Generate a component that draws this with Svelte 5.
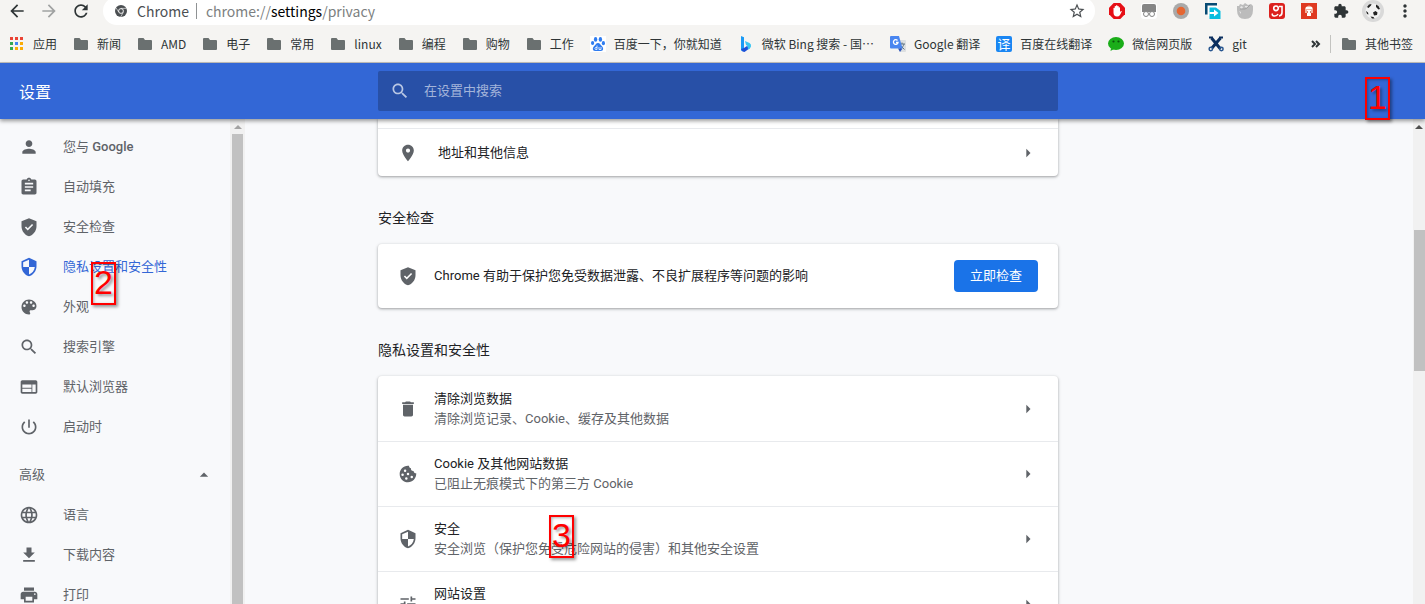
<script lang="ts">
	interface Entry {
		icon: string;
		label: string;
		brand?: string;
		sub?: string;
		active?: boolean;
	}

	const paths: Record<string, string> = {
		person: 'M12 12c2.21 0 4-1.79 4-4s-1.79-4-4-4-4 1.79-4 4 1.79 4 4 4zm0 2c-2.67 0-8 1.34-8 4v2h16v-2c0-2.66-5.33-4-8-4z',
		assignment:
			'M19 3h-4.18C14.4 1.84 13.3 1 12 1c-1.3 0-2.4.84-2.82 2H5c-1.1 0-2 .9-2 2v14c0 1.1.9 2 2 2h14c1.1 0 2-.9 2-2V5c0-1.1-.9-2-2-2zm-7 0c.55 0 1 .45 1 1s-.45 1-1 1-1-.45-1-1 .45-1 1-1zm2 14H7v-2h7v2zm3-4H7v-2h10v2zm0-4H7V7h10v2z',
		check:
			'M12 1.5L3 5v6c0 5.55 3.84 10.74 9 12 5.16-1.26 9-6.45 9-12V5l-9-3.5zM10.5 16.2L7 12.7l1.4-1.4 2.1 2.1 5.1-5.1L17 9.7l-6.5 6.5z',
		security:
			'M12 1L3 5v6c0 5.55 3.84 10.74 9 12 5.16-1.26 9-6.45 9-12V5l-9-4zm0 10.99h7c-.53 4.12-3.28 7.79-7 8.94V12H5V6.3l7-3.11v8.8z',
		palette:
			'M12 3c-4.97 0-9 4.03-9 9s4.03 9 9 9c.83 0 1.5-.67 1.5-1.5 0-.39-.15-.74-.39-1.01-.23-.26-.38-.61-.38-.99 0-.83.67-1.5 1.5-1.5H16c2.76 0 5-2.24 5-5 0-4.42-4.03-8-9-8zm-5.5 9c-.83 0-1.5-.67-1.5-1.5S5.67 9 6.5 9 8 9.67 8 10.5 7.33 12 6.5 12zm3-4C8.67 8 8 7.33 8 6.5S8.67 5 9.5 5s1.5.67 1.5 1.5S10.33 8 9.5 8zm5 0c-.83 0-1.5-.67-1.5-1.5S13.67 5 14.5 5s1.5.67 1.5 1.5S15.33 8 14.5 8zm3 4c-.83 0-1.5-.67-1.5-1.5S16.67 9 17.5 9s1.5.67 1.5 1.5-.67 1.5-1.5 1.5z',
		search:
			'M15.5 14h-.79l-.28-.27C15.41 12.59 16 11.11 16 9.5 16 5.91 13.09 3 9.5 3S3 5.91 3 9.5 5.91 16 9.5 16c1.61 0 3.09-.59 4.23-1.57l.27.28v.79l5 4.99L20.49 19l-4.99-5zm-6 0C7.01 14 5 11.99 5 9.5S7.01 5 9.5 5 14 7.01 14 9.5 11.99 14 9.5 14z',
		web: 'M20 4H4c-1.1 0-1.99.9-1.99 2L2 18c0 1.1.9 2 2 2h16c1.1 0 2-.9 2-2V6c0-1.1-.9-2-2-2zm-5 14H4v-4h11v4zm0-5H4V9h11v4zm5 5h-4V9h4v9z',
		power:
			'M13 3h-2v10h2V3zm4.83 2.17l-1.42 1.42C17.99 7.86 19 9.81 19 12c0 3.87-3.13 7-7 7s-7-3.13-7-7c0-2.19 1.01-4.14 2.58-5.42L6.17 5.17C4.23 6.82 3 9.26 3 12c0 4.97 4.03 9 9 9s9-4.03 9-9c0-2.74-1.23-5.18-3.17-6.83z',
		language:
			'M11.99 2C6.47 2 2 6.48 2 12s4.47 10 9.99 10C17.52 22 22 17.52 22 12S17.52 2 11.99 2zm6.93 6h-2.95c-.32-1.25-.78-2.45-1.38-3.56 1.84.63 3.37 1.91 4.33 3.56zM12 4.04c.83 1.2 1.48 2.53 1.91 3.96h-3.82c.43-1.43 1.08-2.76 1.91-3.96zM4.26 14C4.1 13.36 4 12.69 4 12s.1-1.36.26-2h3.38c-.08.66-.14 1.32-.14 2 0 .68.06 1.34.14 2H4.26zm.82 2h2.95c.32 1.25.78 2.45 1.38 3.56-1.84-.63-3.37-1.9-4.33-3.56zm2.95-8H5.08c.96-1.66 2.49-2.93 4.33-3.56C8.81 5.55 8.35 6.75 8.03 8zM12 19.96c-.83-1.2-1.48-2.53-1.91-3.96h3.82c-.43 1.43-1.08 2.76-1.91 3.96zM14.34 14H9.66c-.09-.66-.16-1.32-.16-2 0-.68.07-1.35.16-2h4.68c.09.65.16 1.32.16 2 0 .68-.07 1.34-.16 2zm.25 5.56c.6-1.11 1.06-2.31 1.38-3.56h2.95c-.96 1.65-2.49 2.93-4.33 3.56zM16.36 14c.08-.66.14-1.32.14-2 0-.68-.06-1.34-.14-2h3.38c.16.64.26 1.31.26 2s-.1 1.36-.26 2h-3.38z',
		download: 'M19 9h-4V3H9v6H5l7 7 7-7zM5 18v2h14v-2H5z',
		print:
			'M19 8H5c-1.66 0-3 1.34-3 3v6h4v4h12v-4h4v-6c0-1.66-1.34-3-3-3zm-3 11H8v-5h8v5zm3-7c-.55 0-1-.45-1-1s.45-1 1-1 1 .45 1 1-.45 1-1 1zm-1-9H6v4h12V3z',
		place:
			'M12 2C8.13 2 5 5.13 5 9c0 5.25 7 13 7 13s7-7.75 7-13c0-3.87-3.13-7-7-7zm0 9.5c-1.38 0-2.5-1.12-2.5-2.5s1.12-2.5 2.5-2.5 2.5 1.12 2.5 2.5-1.12 2.5-2.5 2.5z',
		trash: 'M6 19c0 1.1.9 2 2 2h8c1.1 0 2-.9 2-2V7H6v12zM19 4h-3.5l-1-1h-5l-1 1H5v2h14V4z',
		cookie:
			'M21.9 11.2c-1.7.1-3.1-1.1-3.2-2.8-2.2.2-3.6-1.4-3.1-3.3-1.7-.3-2.6-1.6-2.3-3C6.8 1.3 2 6.2 2 12c0 5.5 4.5 10 10 10s10.2-4.7 9.9-10.8zM8.5 6.5a1.5 1.5 0 1 1 0 3 1.5 1.5 0 0 1 0-3zM5.500 11.5a1.5 1.5 0 1 1 0 3 1.5 1.5 0 0 1 0-3zM12 10.5a1.5 1.5 0 1 1 0 3 1.5 1.5 0 0 1 0-3zM10 16a1.5 1.5 0 1 1 0 3 1.5 1.5 0 0 1 0-3zM16.5 14a1.5 1.5 0 1 1 0 3 1.5 1.5 0 0 1 0-3z',
		tune: 'M3 17v2h6v-2H3zM3 5v2h10V5H3zm10 16v-2h8v-2h-8v-2h-2v6h2zM7 9v2H3v2h4v2h2V9H7zm14 4v-2H11v2h10zm-6-4h2V7h4V5h-4V3h-2v6z',
		right: 'M10 17l5-5-5-5v10z',
		up: 'M7 14l5-5 5 5z',
		back: 'M20 11H7.83l5.59-5.59L12 4l-8 8 8 8 1.41-1.41L7.83 13H20v-2z',
		forward: 'M12 4l-1.41 1.41L16.17 11H4v2h12.17l-5.58 5.59L12 20l8-8z',
		reload:
			'M17.65 6.35C16.2 4.9 14.21 4 12 4c-4.42 0-7.99 3.58-7.99 8s3.57 8 7.99 8c3.73 0 6.84-2.55 7.73-6h-2.08c-.82 2.33-3.04 4-5.65 4-3.31 0-6-2.69-6-6s2.69-6 6-6c1.66 0 3.14.69 4.22 1.78L13 11h7V4l-2.35 2.35z',
		star: 'M22 9.24l-7.19-.62L12 2 9.19 8.63 2 9.24l5.46 4.73L5.82 21 12 17.27 18.18 21l-1.63-7.03L22 9.24zM12 15.4l-3.76 2.27 1-4.28-3.32-2.88 4.38-.38L12 6.1l1.71 4.04 4.38.38-3.32 2.88 1 4.28L12 15.4z',
		more: 'M12 8c1.1 0 2-.9 2-2s-.9-2-2-2-2 .9-2 2 .9 2 2 2zm0 2c-1.1 0-2 .9-2 2s.9 2 2 2 2-.9 2-2-.9-2-2-2zm0 6c-1.1 0-2 .9-2 2s.9 2 2 2 2-.9 2-2-.9-2-2-2z',
		puzzle:
			'M20.5 11H19V7c0-1.1-.9-2-2-2h-4V3.5C13 2.12 11.88 1 10.5 1S8 2.12 8 3.5V5H4c-1.1 0-1.99.9-1.99 2v3.8H3.5c1.49 0 2.7 1.21 2.7 2.7s-1.21 2.7-2.7 2.7H2V20c0 1.1.9 2 2 2h3.8v-1.5c0-1.49 1.21-2.7 2.7-2.7s2.7 1.21 2.7 2.7V22H17c1.1 0 2-.9 2-2v-4h1.5c1.38 0 2.5-1.12 2.5-2.5S21.88 11 20.5 11z'
	};

	const bookmarks: Entry[] = [
		{ icon: 'apps', label: '应用' },
		{ icon: 'folder', label: '新闻' },
		{ icon: 'folder', label: 'AMD' },
		{ icon: 'folder', label: '电子' },
		{ icon: 'folder', label: '常用' },
		{ icon: 'folder', label: 'linux' },
		{ icon: 'folder', label: '编程' },
		{ icon: 'folder', label: '购物' },
		{ icon: 'folder', label: '工作' },
		{ icon: 'baidu', label: '百度一下，你就知道' },
		{ icon: 'bing', label: '微软 Bing 搜索 - 国⋯' },
		{ icon: 'gtranslate', label: 'Google 翻译' },
		{ icon: 'fanyi', label: '百度在线翻译' },
		{ icon: 'wechat', label: '微信网页版' },
		{ icon: 'git', label: 'git' }
	];

	const extensions = ['block', 'tamper', 'record', 'transfer', 'globe', 'weibo', 'avatar', 'puzzle', 'ball', 'more'];

	const menu: Entry[] = [
		{ icon: 'person', label: '您与', brand: 'Google' },
		{ icon: 'assignment', label: '自动填充' },
		{ icon: 'check', label: '安全检查' },
		{ icon: 'security', label: '隐私设置和安全性', active: true },
		{ icon: 'palette', label: '外观' },
		{ icon: 'search', label: '搜索引擎' },
		{ icon: 'web', label: '默认浏览器' },
		{ icon: 'power', label: '启动时' }
	];

	const advanced: Entry[] = [
		{ icon: 'language', label: '语言' },
		{ icon: 'download', label: '下载内容' },
		{ icon: 'print', label: '打印' }
	];

	const privacy: Entry[] = [
		{ icon: 'trash', label: '清除浏览数据', sub: '清除浏览记录、Cookie、缓存及其他数据' },
		{ icon: 'cookie', label: 'Cookie 及其他网站数据', sub: '已阻止无痕模式下的第三方 Cookie' },
		{ icon: 'security', label: '安全', sub: '安全浏览（保护您免受危险网站的侵害）和其他安全设置' },
		{ icon: 'tune', label: '网站设置' }
	];

	let query = $state('');
</script>

{#snippet icon(name: string)}
	<svg class="icon" viewBox="0 0 24 24" aria-hidden="true"><path d={paths[name]} /></svg>
{/snippet}

{#snippet picture(name: string)}
	<svg class="picture" viewBox="0 0 16 16" aria-hidden="true">
		{#if name === 'apps'}
			<path fill="#ea4335" d="M1 1h3v3H1zM6 1h3v3H6zM11 1h3v3h-3z" />
			<path fill="#34a853" d="M1 6h3v3H1zM1 11h3v3H1z" />
			<path fill="#4285f4" d="M6 6h3v3H6z" />
			<path fill="#fbac05" d="M11 6h3v3h-3zM6 11h3v3H6zM11 11h3v3h-3z" />
		{:else if name === 'folder'}
			<path fill="#6a7070" d="M2 2h4.500L8 4h6q1 0 1 1v8q0 1-1 1H2q-1 0-1-1V3q0-1 1-1z" />
		{:else if name === 'baidu'}
			<path fill="#fff" d="M0 0h16v16H0z" />
			<g fill="#2f7cf0">
				<ellipse cx="5.6" cy="3.4" rx="1.7" ry="2.3" />
				<ellipse cx="10.4" cy="3.4" rx="1.7" ry="2.3" />
				<ellipse cx="2.6" cy="7" rx="1.6" ry="2.1" />
				<ellipse cx="13.4" cy="7.2" rx="1.6" ry="2.1" />
				<path d="M8 7c2 0 2.5 2 4 3.3 1.8 1.6 1.5 4.7-1 4.7H5c-2.5 0-2.8-3.1-1-4.7C5.5 9 6 7 8 7z" />
			</g>
			<path fill="none" stroke="#fff" stroke-width="0.8" d="M7 9.5v4H5.5q-1-1 0-2H7M9 11v2.5h2V11" />
		{:else if name === 'bing'}
			<path fill="#1a9af5" d="M3 0l3 1.2v12L3 15z" />
			<path fill="#1b50d8" d="M3 13l3-1 3-2 3 2-5.500 4-2-.5z" />
			<path fill="#39c5f2" d="M7 5l4.500 2q2 1 1.500 3.500-.5 2-3 3l-.5-3.500-1.500-1z" />
		{:else if name === 'gtranslate'}
			<path fill="#dcdfe1" d="M7 4h8q1 0 1 1v10q0 1-1 1h-5z" />
			<path fill="none" stroke="#5f7585" d="M9 8h6M12 6.5V8M14 8c-.5 2-2 4-4 5M10.5 9.5l4 4" />
			<path fill="#4a86f0" d="M1 0h8l3.5 12.5H1q-1 0-1-1V1q0-1 1-1z" />
			<path fill="#2a52bb" d="M8 12.5h4.5L10 16z" />
			<path fill="none" stroke="#fff" stroke-width="1.3" d="M7.5 4.5A2.3 2.3 0 1 0 8 6.5H6" />
		{:else if name === 'fanyi'}
			<rect width="16" height="16" rx="2" fill="#1a86f3" />
			<text x="8" y="13" text-anchor="middle" font-size="13" fill="#fff">译</text>
		{:else if name === 'wechat'}
			<ellipse cx="8" cy="7.5" rx="8" ry="6.5" fill="#1aad19" />
			<path fill="#1aad19" d="M3 12l-.5 3 3.5-2z" />
			<circle cx="5.5" cy="5.5" r="1.1" fill="#0b4f0b" />
			<circle cx="10.5" cy="5.5" r="1.1" fill="#0b4f0b" />
		{:else if name === 'git'}
			<path fill="none" stroke="#0b2f5f" stroke-width="3" d="M3.500 2l9 11M12.500 2L4 12" />
			<path fill="none" stroke="#0b2f5f" stroke-width="2" d="M1 1.5h4M11 1.5h4" />
			<circle cx="2.8" cy="13" r="1.7" fill="none" stroke="#275690" stroke-width="1.5" />
			<circle cx="13.4" cy="13" r="1.7" fill="none" stroke="#275690" stroke-width="1.5" />
		{:else if name === 'chrome'}
			<circle cx="8" cy="8" r="8" fill="#4b4f52" />
			<circle cx="8" cy="8" r="3.2" fill="#4b4f52" stroke="#fff" stroke-width="1.2" />
			<path fill="none" stroke="#fff" stroke-width="0.8" d="M8 4.5h7M5 9.5L1.5 4M11 9.800L7.5 16" />
		{:else if name === 'block'}
			<path fill="#e60f16" d="M4.7 0h6.6L16 4.7v6.6L11.3 16H4.7L0 11.3V4.7z" />
			<path
				fill="#fff"
				d="M4.500 5q.8-.6 1.200.3V3.200q.7-.6 1.300 0V2.500q.7-.7 1.400 0v.7q.7-.6 1.300 0v1.300q.7-.5 1.300 0V9l1-1q.8-.3.8.5L11 12q-1 1.500-3 1.500-3.500 0-3.500-4z"
			/>
		{:else if name === 'tamper'}
			<rect x="0" y="0" width="16" height="16" rx="3" fill="#fff" />
			<rect x="1" y="1" width="14" height="14" rx="2" fill="#858585" />
			<path fill="#fff" d="M1 9h14v6H1z" />
			<circle cx="5" cy="11" r="2.5" fill="#fff" stroke="#858585" />
			<circle cx="11" cy="11" r="2.5" fill="#fff" stroke="#858585" />
		{:else if name === 'record'}
			<circle cx="8" cy="8" r="8" fill="#a9a9a9" />
			<circle cx="8" cy="8" r="4.3" fill="#e56632" />
		{:else if name === 'transfer'}
			<path fill="#064b74" d="M0 0h12v2.500H2.500v9H0z" />
			<path fill="#fff" d="M3 3h10v3H5v7H3z" />
			<path fill="#08bddf" d="M4.500 4.500H11L15.500 8v8h-11z" />
			<path fill="#fff" d="M4.500 9H9V6.500l4.500 3.500L9 13.500V11H4.500z" />
		{:else if name === 'globe'}
			<path fill="#bcbcbc" d="M0 3l2 0 1-2 3 1 2-2 3 2 3-1 2 2v4q0 9-8 9T0 7z" />
			<path fill="#e6e6e6" d="M3 4l2-1 1 2-2 1zM8 3l3 0-1 2-2-1zM2 8l2 1v2z" />
			<path fill="none" stroke="#999" stroke-width="0.8" d="M3 6l5 0 2-1 3-3" />
		{:else if name === 'weibo'}
			<rect width="16" height="16" rx="3" fill="#dc211e" />
			<path
				fill="none"
				stroke="#fff"
				stroke-width="1.6"
				d="M7 3a2.300 2.300 0 1 0 0 4.600A2.300 2.300 0 0 0 7 3M3.500 10.500c-1.500 3 4 3.500 5.500.5M10 3.500h3v6q0 3-3 3.500"
			/>
		{:else if name === 'avatar'}
			<path fill="#df3921" d="M0 0h16v16H0z" />
			<path fill="#f3b09d" d="M4 5q4-5 8 0v5H4z" />
			<path fill="#fff" d="M6 7h4v6H6zM5 4h6v2H5z" />
			<path fill="#d47f6e" d="M6 8h1v2H6zM9 8h1v2H9z" />
		{/if}
	</svg>
{/snippet}

{#snippet nav(items: Entry[])}
	{#each items as item}
		<a class="item" class:active={item.active} href="#{item.icon}">
			{@render icon(item.icon)}
			<span>{item.label}{#if item.brand}&nbsp;<b>{item.brand}</b>{/if}</span>
		</a>
	{/each}
{/snippet}

<div class="window">
	<div class="toolbar">
		<button class="tool" aria-label="后退">{@render icon('back')}</button>
		<button class="tool disabled" aria-label="前进">{@render icon('forward')}</button>
		<button class="tool" aria-label="重新加载">{@render icon('reload')}</button>
		<div class="omnibox">
			<span class="site">{@render picture('chrome')}</span>
			<span class="scheme">Chrome</span>
			<span class="url">chrome://<b>settings</b>/privacy</span>
			<button class="tool star" aria-label="收藏">{@render icon('star')}</button>
		</div>
		{#each extensions as name}
			<button class="tool {name}" aria-label={name}>
				{#if name === 'ball'}
					<svg viewBox="0 0 22 22" aria-hidden="true">
						<circle cx="11" cy="11" r="11" fill="#d9d9d9" />
						<circle cx="11" cy="11" r="7.5" fill="#f1f1f1" />
						<path
							fill="#222"
							d="M5 7l2-2.500 2.500-.5-.5 1.500L6.500 8zM14 4.500l2.500 1.500 1.500 3-1.500.5L14 7zM4 11l2 1.500.5 2L5 14zM11 12.500l2.500-1.500 2 1.500-.5 2.500-3 .5zM8.500 16.500l3 .5 1 1.500-2.500 0z"
						/>
					</svg>
				{:else if paths[name]}
					{@render icon(name)}
				{:else}
					{@render picture(name)}
				{/if}
			</button>
		{/each}
	</div>

	<div class="bookmarks">
		{#each bookmarks as mark}
			<a class="bookmark" href="#{mark.icon}">
				{@render picture(mark.icon)}
				<span>{mark.label}</span>
			</a>
		{/each}
		<button class="overflow" aria-label="更多书签">
			<svg viewBox="0 0 10 8" aria-hidden="true"><path d="M1 1l3 3-3 3M5 1l3 3-3 3" /></svg>
		</button>
		<a class="bookmark other" href="#other">
			{@render picture('folder')}
			<span>其他书签</span>
		</a>
	</div>

	<header>
		<h1>设置</h1>
		<label class="search">
			{@render icon('search')}
			<input type="text" placeholder="在设置中搜索" aria-label="在设置中搜索" bind:value={query} />
		</label>
		<span class="mark first">1</span>
	</header>

	<div class="body">
		<nav>
			<div class="list">
				{@render nav(menu)}
				<button class="toggle">
					<span>高级</span>
					{@render icon('up')}
				</button>
				{@render nav(advanced)}
			</div>
			<div class="scrollbar side">
				<span class="arrow"></span>
				<div class="thumb"></div>
			</div>
			<span class="mark second">2</span>
		</nav>

		<main>
			<div class="column">
				<section class="card cut">
					<a class="row single" href="#addresses">
						{@render icon('place')}
						<span class="title">地址和其他信息</span>
						{@render icon('right')}
					</a>
				</section>

				<h2>安全检查</h2>
				<section class="card safety">
					{@render icon('check')}
					<span class="title">Chrome 有助于保护您免受数据泄露、不良扩展程序等问题的影响</span>
					<button class="action">立即检查</button>
				</section>

				<h2>隐私设置和安全性</h2>
				<section class="card">
					{#each privacy as row, i}
						<a class="row" href="#{row.icon}">
							{@render icon(row.icon)}
							<span class="text">
								<span class="title">{row.label}</span>
								{#if row.sub}<span class="sub">{row.sub}</span>{/if}
							</span>
							{@render icon('right')}
							{#if i === 2}<span class="mark third">3</span>{/if}
						</a>
					{/each}
				</section>
			</div>
		</main>
		<div class="scrollbar page">
			<span class="arrow"></span>
			<div class="thumb"></div>
		</div>
	</div>
</div>

<style>
	:global(body) {
		margin: 0;
		overflow: hidden;
	}
	.window {
		display: flex;
		flex-direction: column;
		height: 100vh;
		overflow: hidden;
		background: #f8f9fb;
		font-family: Roboto, 'Noto Sans CJK SC', sans-serif;
		font-size: 13px;
		line-height: 20px;
		color: #202124;
	}
	a {
		color: inherit;
		text-decoration: none;
	}
	button {
		padding: 0;
		border: 0;
		background: none;
		font: inherit;
		color: inherit;
	}
	.icon {
		flex: none;
		width: 20px;
		height: 20px;
		fill: #5f6368;
	}
	.picture {
		display: block;
		flex: none;
		width: 16px;
		height: 16px;
	}

	/* browser chrome */
	.toolbar {
		display: flex;
		flex: none;
		align-items: center;
		height: 22px;
		padding: 0 4px 3px 1px;
		background: #f5f4f2;
		font-family: 'Noto Sans CJK SC', sans-serif;
	}
	.tool {
		display: flex;
		flex: none;
		align-items: center;
		justify-content: center;
		width: 32px;
		height: 28px;
	}
	.tool .icon {
		fill: #2e3436;
	}
	.tool.disabled .icon {
		fill: #a0a2a2;
	}
	.tool.puzzle .icon {
		width: 16px;
		height: 16px;
	}
	.tool.ball svg {
		width: 22px;
		height: 22px;
	}
	.omnibox {
		display: flex;
		flex: 1;
		align-items: center;
		height: 28px;
		margin: 0 6px;
		padding: 0 2px 0 12px;
		border-radius: 14px;
		background: #fff;
		font-size: 14px;
		color: #4b4f52;
	}
	.site .picture {
		width: 12px;
		height: 12px;
	}
	.scheme {
		margin-left: 10px;
		padding-right: 7px;
		border-right: 1px solid #8f9294;
		line-height: 16px;
	}
	.url {
		flex: 1;
		margin-left: 9px;
		line-height: 16px;
		color: #7c7f81;
	}
	.url b {
		font-weight: 400;
		color: #000;
	}
	.omnibox .star .icon {
		width: 18px;
		height: 18px;
		fill: #4b4f52;
	}
	.bookmarks {
		display: flex;
		flex: none;
		align-items: center;
		gap: 16px;
		height: 37px;
		padding: 0 12px 0 9px;
		border-bottom: 1px solid #c3c1be;
		background: #f5f4f2;
		font-family: 'Noto Sans CJK SC', sans-serif;
		font-size: 12px;
		line-height: 18px;
		color: #2e3436;
		white-space: nowrap;
	}
	.bookmark {
		display: flex;
		align-items: center;
		gap: 8px;
	}
	.overflow {
		width: 10px;
		margin: 0 -7px 0 auto;
	}
	.overflow svg {
		display: block;
		width: 10px;
		height: 8px;
		fill: none;
		stroke: #2e3436;
		stroke-width: 2;
	}
	.other {
		padding-left: 10px;
		border-left: 1px solid #c3c3c0;
	}

	/* settings header */
	header {
		position: relative;
		z-index: 1;
		display: grid;
		flex: none;
		grid-template-columns: 245px 3fr minmax(0, 680px) 8fr;
		align-items: center;
		height: 56px;
		padding-right: 12px;
		background: #3367d6;
		box-shadow: 0 2px 4px rgba(0, 0, 0, 0.4);
	}
	h1 {
		margin: 0;
		padding: 4px 0 0 19px;
		font-size: 16px;
		font-weight: 400;
		color: #fff;
	}
	.search {
		display: flex;
		grid-column: 3;
		align-items: center;
		gap: 14px;
		height: 40px;
		padding: 0 12px;
		border-radius: 2px;
		background: #2850a7;
	}
	.search .icon {
		fill: #b9c7e4;
	}
	.search input {
		flex: 1;
		min-width: 0;
		padding: 0;
		border: 0;
		outline: 0;
		background: none;
		font: inherit;
		color: #fff;
	}
	.search input::placeholder {
		color: #a3b4da;
	}

	.body {
		display: flex;
		flex: 1;
		min-height: 0;
	}
	nav {
		position: relative;
		display: flex;
		flex: none;
		width: 245px;
	}
	.list {
		flex: 1;
		padding-top: 8px;
		color: #5f6368;
	}
	.item,
	.toggle {
		display: flex;
		align-items: center;
		height: 40px;
		padding-left: 19px;
	}
	.item {
		gap: 24px;
	}
	.item b {
		font-weight: 500;
	}
	.item.active {
		color: #3367d6;
	}
	.item.active .icon {
		fill: #3367d6;
	}
	.toggle {
		justify-content: space-between;
		width: 100%;
		margin-top: 8px;
		padding-right: 16px;
	}

	.scrollbar {
		flex: none;
		background: #f1f1f1;
	}
	.scrollbar .arrow {
		display: block;
		width: 0;
		margin: 6px auto 0;
		border: 4px solid transparent;
		border-top: 0;
		border-bottom-color: #a3a3a3;
	}
	.thumb {
		background: #c1c1c1;
	}
	.side {
		display: flex;
		flex-direction: column;
		width: 15px;
	}
	.side .thumb {
		flex: 1;
		margin: 5px 2px 0;
	}
	.page {
		width: 12px;
	}
	.page .arrow {
		border-bottom-color: #505050;
	}
	.page .thumb {
		height: 141px;
		margin: 101px 0 0 1px;
	}

	main {
		display: grid;
		flex: 1;
		grid-template-columns: 3fr minmax(0, 680px) 8fr;
		min-width: 0;
	}
	.column {
		grid-column: 2;
	}
	h2 {
		margin: 32px 0 16px;
		font-size: 14px;
		font-weight: 400;
	}
	.card {
		border-radius: 4px;
		background: #fff;
		box-shadow:
			0 1px 2px rgba(60, 64, 67, 0.3),
			0 1px 3px 1px rgba(60, 64, 67, 0.15);
	}
	.cut {
		padding-top: 9px;
		border-radius: 0 0 4px 4px;
	}
	.row {
		position: relative;
		display: flex;
		align-items: center;
		gap: 16px;
		box-sizing: border-box;
		height: 65px;
		padding: 0 20px;
		border-top: 1px solid #e8eaed;
	}
	.row:first-child:not(.single) {
		border-top-color: transparent;
	}
	.single {
		gap: 20px;
		height: 48px;
	}
	.safety {
		display: flex;
		align-items: center;
		gap: 16px;
		height: 64px;
		padding: 0 20px;
	}
	.title {
		flex: 1;
	}
	.text {
		display: flex;
		flex: 1;
		flex-direction: column;
		height: 40px;
	}
	.text .title {
		flex: none;
	}
	.sub {
		color: #5f6368;
	}
	.action {
		height: 32px;
		padding: 0 16px;
		border-radius: 4px;
		background: #1a73e8;
		color: #fff;
	}

	/* numbered callouts lying over the page */
	.mark {
		position: absolute;
		z-index: 2;
		box-sizing: border-box;
		width: 25px;
		height: 43px;
		border: 2px solid #f00;
		box-shadow:
			2px 2px 3px rgba(0, 0, 0, 0.4),
			inset 1px 1px 3px rgba(0, 0, 0, 0.3);
		font-family: 'Liberation Sans', sans-serif;
		font-size: 34px;
		line-height: 37px;
		text-align: center;
		text-shadow: 2px 2px 3px rgba(0, 0, 0, 0.4);
		color: #f00;
	}
	.first {
		top: 14px;
		right: 35px;
	}
	.second {
		top: 143px;
		left: 91px;
	}
	.third {
		top: 8px;
		left: 171px;
	}
</style>
